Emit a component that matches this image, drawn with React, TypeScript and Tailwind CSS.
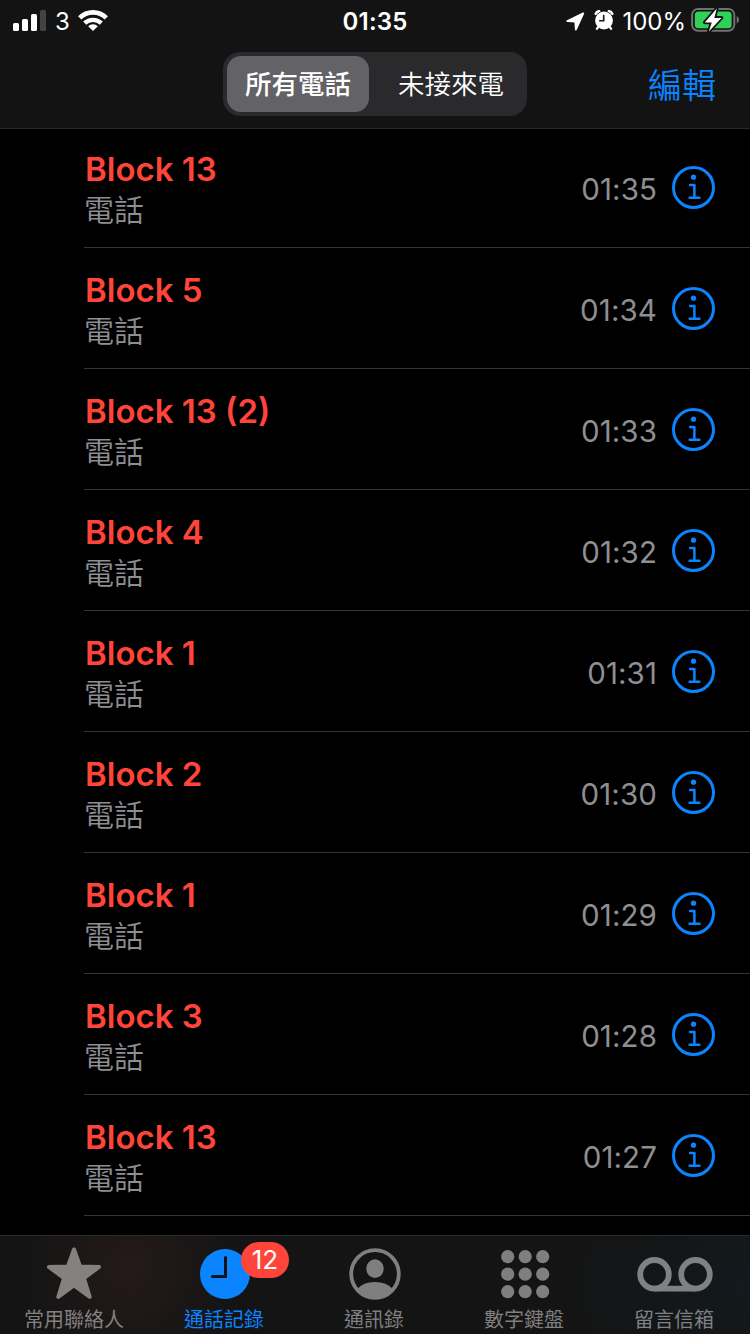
type Call = { name: string; time: string };

const calls: Call[] = [
  { name: 'Block 13', time: '01:35' },
  { name: 'Block 5', time: '01:34' },
  { name: 'Block 13 (2)', time: '01:33' },
  { name: 'Block 4', time: '01:32' },
  { name: 'Block 1', time: '01:31' },
  { name: 'Block 2', time: '01:30' },
  { name: 'Block 1', time: '01:29' },
  { name: 'Block 3', time: '01:28' },
  { name: 'Block 13', time: '01:27' },
];

function SignalIcon() {
  return (
    <svg width="33" height="21" viewBox="0 0 33 21" fill="#fff">
      <rect x="0" y="13" width="6" height="8" rx="1.5" />
      <rect x="9" y="9" width="6" height="12" rx="1.5" />
      <rect x="18" y="4" width="6" height="17" rx="1.5" />
      <rect x="27" y="0" width="6" height="21" rx="1.5" fill="#434343" />
    </svg>
  );
}

function WifiIcon() {
  return (
    <svg width="30" height="22" viewBox="0 0 30 22">
      <g fill="none" stroke="#fff">
        <path d="M1.7 8.9a19 19 0 0 1 26.6 0" strokeWidth="4.7" />
        <path d="M6.7 14.2a11.9 11.9 0 0 1 16.6 0" strokeWidth="4.4" />
      </g>
      <path d="M15 22l-4.8-4.7a6.8 6.8 0 0 1 9.6 0z" fill="#fff" />
    </svg>
  );
}

function LocationIcon() {
  return (
    <svg width="19" height="19" viewBox="0 0 19 19">
      <path d="M17.200 1.400L1.400 9.100L9.400 9.500L9.900 17.400z" fill="#fff" stroke="#fff" strokeWidth="2" strokeLinejoin="round" />
    </svg>
  );
}

function AlarmIcon() {
  return (
    <svg width="20" height="21" viewBox="0 0 20 21">
      <path d="M2.100 3.700Q3 2 4.900 1.500M17.900 3.700Q17 2 15.100 1.500" stroke="#fff" strokeWidth="3.200" strokeLinecap="round" fill="none" />
      <circle cx="10" cy="10.500" r="9.600" fill="#131313" />
      <path d="M4.500 16.800L2.900 18.800M15.500 16.800L17.100 18.800" stroke="#fff" strokeWidth="2.200" strokeLinecap="round" />
      <circle cx="10" cy="10.500" r="8.900" fill="#fff" />
      <path d="M9.700 5.500v5.300H5.700" fill="none" stroke="#131313" strokeWidth="1.600" strokeLinecap="round" />
    </svg>
  );
}

function BatteryIcon() {
  return (
    <svg width="49" height="26" viewBox="0 0 49 26">
      <rect x="2.100" y="1.900" width="42.200" height="21.800" rx="6" fill="none" stroke="#717173" strokeWidth="2" />
      <rect x="4.800" y="4.400" width="36.800" height="16.800" rx="3.500" fill="#30d158" />
      <path d="M46.700 9q2.300 1 2.300 3.800t-2.300 3.800z" fill="#717173" />
      <path
        d="M26.800 1.500L14.800 15.400h7L18.800 24.600L31.500 10.900h-7.200z"
        fill="#fff"
        stroke="#131313"
        strokeWidth="3.600"
        strokeLinejoin="round"
        paintOrder="stroke"
      />
    </svg>
  );
}

function InfoIcon() {
  return (
    <svg width="43" height="43" viewBox="0 0 43 43" fill="none" stroke="#0a84ff">
      <circle cx="21.500" cy="21.500" r="20" strokeWidth="3" />
      <circle cx="21.500" cy="11.200" r="2.600" fill="#0a84ff" stroke="none" />
      <path d="M18.100 18.900h4.300v12.700M17.600 31.700h9.800" strokeWidth="2.500" strokeLinecap="round" strokeLinejoin="round" />
    </svg>
  );
}

function StarIcon() {
  return (
    <svg width="56" height="54" viewBox="0 0 56 54">
      <path
        d="M27 2.500L33.100 19.500L52 20L36.900 31.200L42.700 49.800L27 38.500L11.300 49.800L17.100 31.200L2 20L20.900 19.500Z"
        fill="#848180"
        stroke="#848180"
        strokeWidth="4"
        strokeLinejoin="round"
      />
    </svg>
  );
}

function ClockIcon() {
  return (
    <svg width="50" height="50" viewBox="0 0 50 50">
      <circle cx="25" cy="25" r="25" fill="#0a84ff" />
      <path d="M25.500 8.500v19H12.500" fill="none" stroke="#141414" strokeWidth="3" strokeLinecap="round" />
    </svg>
  );
}

function PersonIcon() {
  return (
    <svg width="52" height="52" viewBox="0 0 52 52">
      <circle cx="26" cy="26" r="23.800" fill="none" stroke="#7f7f7f" strokeWidth="3.800" />
      <ellipse cx="26" cy="20.600" rx="8.700" ry="9.300" fill="#7f7f7f" />
      <path d="M8.500 41Q14 34 26 34T43.500 41Q36 50 26 50T8.500 41z" fill="#7f7f7f" />
    </svg>
  );
}

function KeypadIcon() {
  const stops = [6.7, 24.2, 41.7];
  return (
    <svg width="49" height="49" viewBox="0 0 49 49" fill="#7f7f7f">
      {stops.map((y) => stops.map((x) => <circle key={`${x}-${y}`} cx={x} cy={y} r="6.600" />))}
    </svg>
  );
}

function VoicemailIcon() {
  return (
    <svg width="76" height="35" viewBox="0 0 76 35" fill="none" stroke="#7f8183" strokeWidth="5.800">
      <circle cx="17.500" cy="17.300" r="14.300" />
      <circle cx="58.500" cy="17.300" r="14.300" />
      <path d="M17.500 31.600h41" />
    </svg>
  );
}

const tabs = [
  { label: '常用聯絡人', icon: <StarIcon />, color: 'text-[#828080]' },
  { label: '通話記錄', icon: <ClockIcon />, color: 'text-[#0a84ff]', badge: '12' },
  { label: '通訊錄', icon: <PersonIcon />, color: 'text-[#7f7f7f]' },
  { label: '數字鍵盤', icon: <KeypadIcon />, color: 'text-[#7f7f7f]' },
  { label: '留言信箱', icon: <VoicemailIcon />, color: 'text-[#7f8183]' },
];

export default function App() {
  return (
    <div className="flex h-[1334px] w-[750px] flex-col overflow-hidden bg-black font-['Inter','Noto_Sans_CJK_TC',sans-serif] text-white">
      <header className="h-[129px] shrink-0 border-b border-[#2a2a2b] bg-[#131313]">
        <div className="grid h-[40px] grid-cols-3 items-center">
          <div className="flex items-center pl-[13px]">
            <SignalIcon />
            <span className="ml-[9px] mt-[3px] w-[15px] text-[24px] leading-[30px]">3</span>
            <span className="ml-[8px]">
              <WifiIcon />
            </span>
          </div>
          <div className="mt-[3px] text-center text-[24px] font-semibold leading-[30px] tracking-[0.2px]">01:35</div>
          <div className="flex items-center justify-end pr-[11px]">
            <span className="mt-[2px]">
              <LocationIcon />
            </span>
            <span className="ml-[9px]">
              <AlarmIcon />
            </span>
            <span className="ml-[8px] mt-[3px] text-[24px] leading-[30px]">100%</span>
            <span className="ml-[4px]">
              <BatteryIcon />
            </span>
          </div>
        </div>
        <div className="flex h-[88px] items-center pr-[34px]">
          <div className="ml-[223px] flex h-[64px] w-[304px] rounded-[17px] bg-[#2a2a2c] p-[4px]">
            <button className="h-[56px] w-[142px] rounded-[14px] bg-[#636267] text-[26.500px] font-medium leading-[56px]">所有電話</button>
            <button className="ml-[10px] flex-1 text-[26.500px] font-[350] leading-[57px]">未接來電</button>
          </div>
          <button className="ml-auto mt-[3px] text-[34px] font-[350] leading-[50px] text-[#0a84ff]">編輯</button>
        </div>
      </header>

      <main className="min-h-0 flex-1 overflow-hidden">
        <ul className="-mt-[2px] pl-[84px]">
          {calls.map((c) => (
            <li key={c.time} className="flex h-[121px] items-center border-b border-[#343436] pr-[35px]">
              <div className="flex flex-col pt-[4px]">
                <span className="pl-px text-[33px] font-semibold leading-[42px] text-[#ff453a]">{c.name}</span>
                <span className="text-[30px] font-[350] leading-[40px] text-[#8e8e93]">電話</span>
              </div>
              <span className="ml-auto mr-[15px] mt-[4px] text-[29.500px] leading-[36px] tracking-[0.100px] text-[#8e8e93]">{c.time}</span>
              <InfoIcon />
            </li>
          ))}
        </ul>
      </main>

      <nav className="grid h-[99px] shrink-0 grid-cols-5 border-t border-[#2b2a2a] bg-[#141414] bg-[radial-gradient(ellipse_110px_120px_at_130px_30px,#241a19,transparent),radial-gradient(ellipse_190px_160px_at_750px_50px,#13191d,transparent)]">
        {tabs.map((t) => (
          <div key={t.label} className={`flex flex-col items-center ${t.color}`}>
            <div className="relative flex h-[71px] items-center justify-center pt-[5px]">
              {t.icon}
              {t.badge && (
                <span className="absolute left-[41px] top-[6px] h-[36px] w-[48px] rounded-full bg-[#ff453a] text-center text-[26px] leading-[36px] text-white">
                  {t.badge}
                </span>
              )}
            </div>
            <span className="pr-[2px] text-[20px] leading-[26px]">{t.label}</span>
          </div>
        ))}
      </nav>
    </div>
  );
}
